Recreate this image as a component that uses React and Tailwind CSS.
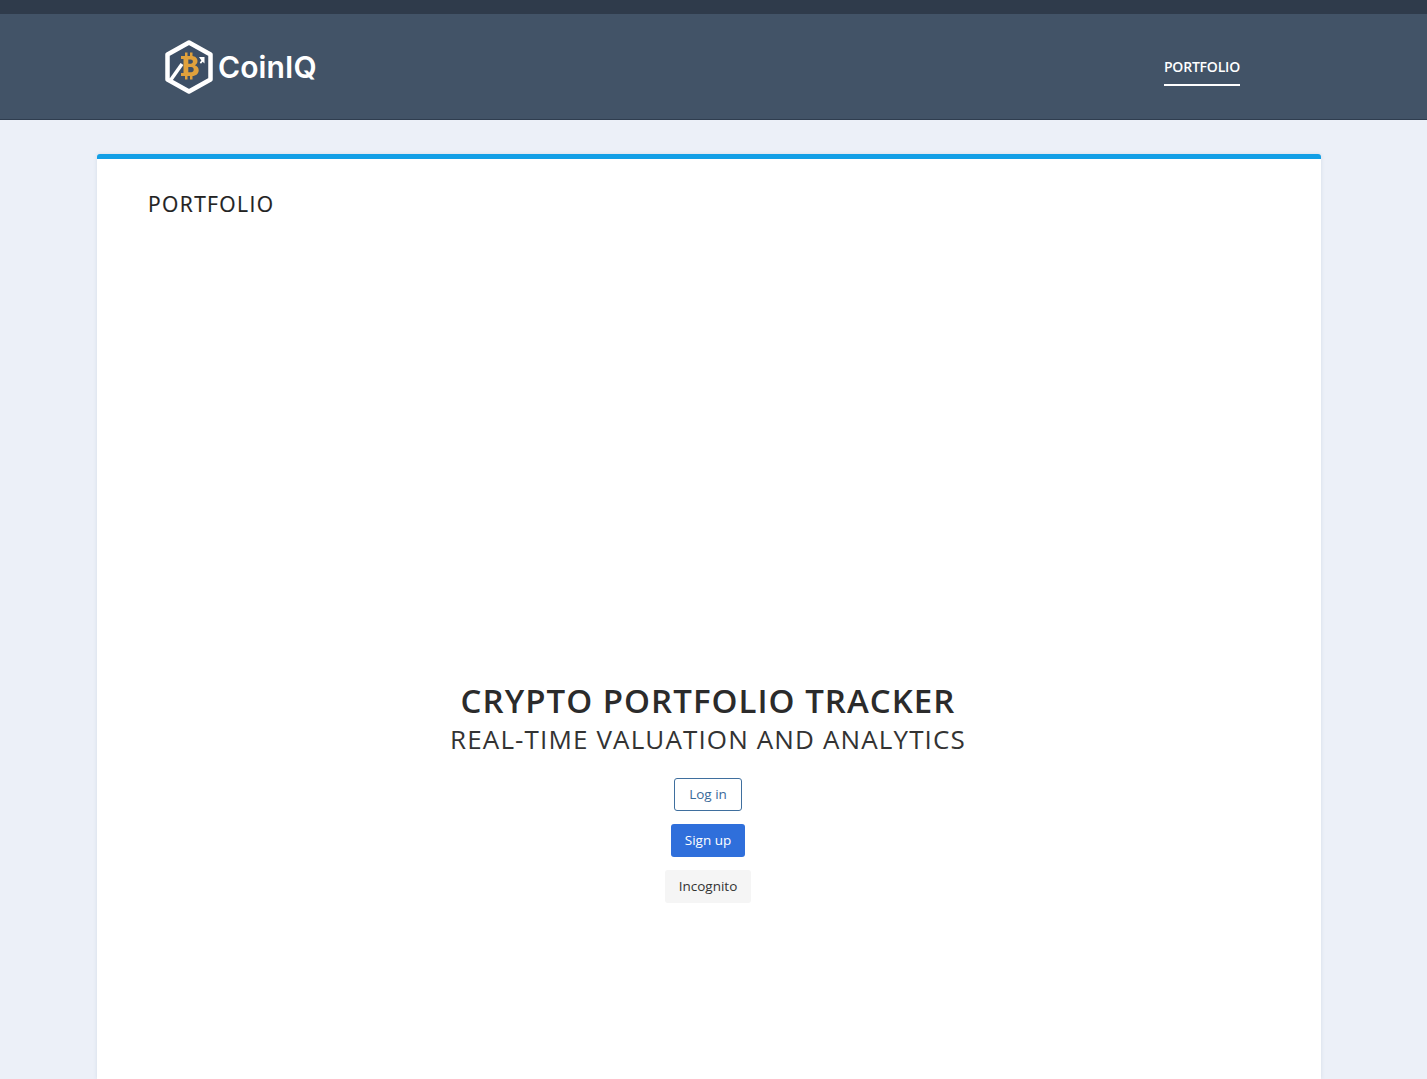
import React from "react";

const Logo = () => (
  <svg width="50" height="54" viewBox="0 0 50 54" fill="none">
    <path d="M25 2.5 46.5 14.5V39.5L25 51.5 3.5 39.5V14.5Z" stroke="#fff" strokeWidth="4.5" strokeLinejoin="round" fill="#3d4f66" />
    <path d="M6 41 18 24" stroke="#fff" strokeWidth="3.5" />
    <path
      fillRule="evenodd"
      d="M17 16h10.500c3.800 0 6 2.200 6 5 0 2-1 3.500-2.700 4.200 2.300.6 3.900 2.500 3.900 5 0 3.400-2.600 5.800-6.500 5.800H17v-3h2.500V19H17Zm7.300 3.500v4.200h2.400c1.400 0 2.200-.8 2.200-2.100s-.8-2.100-2.200-2.100Zm0 7.400v5.400h2.900c1.600 0 2.500-1 2.500-2.700s-.9-2.700-2.500-2.700Z"
      fill="#e0a13c"
    />
    <path d="M21 12.500h2.500v3.500H21ZM26 12.500h2.500v3.500H26ZM21 36h2.500v3.500H21ZM26 36h2.500v3.500H26Z" fill="#e0a13c" />
    <path d="M35 17h5.500v6.500l-1.800-1.700-1.700 2-1.300-1.200 1.700-2Z" fill="#fff" />
  </svg>
);

export default function App() {
  return (
    <div className="h-screen overflow-hidden flex flex-col bg-[#ecf0f8] font-['Open_Sans',sans-serif] text-[#2b2b2b]">
      <div className="h-[14px] shrink-0 bg-[#2f3b4b]" />
      <header className="h-[106px] shrink-0 bg-[#425367] border-b border-[#2f3d4f] flex items-center justify-between pl-[164px] pr-[187px]">
        <div className="flex items-center gap-[4px]">
          <Logo />
          <span className="font-['Inter',sans-serif] font-semibold text-[30px] leading-none tracking-[0.1px] text-white">
            CoinIQ
          </span>
        </div>
        <a className="mt-[9px] border-b-2 border-white pb-[7px] text-[14px] leading-[20px] font-semibold tracking-[-0.2px] text-white">
          PORTFOLIO
        </a>
      </header>

      <main className="flex-1 min-h-0 pt-[34px] pl-[97px] pr-[106px]">
        <div className="h-full rounded-t-[3px] border-t-[5px] border-[#129fe6] bg-white shadow-[0_0_4px_rgba(60,80,110,0.12)] pt-[29px] pl-[51px] pr-[53px]">
          <h2 className="text-[21px] leading-[32px] tracking-[1.4px] text-[#222] [-webkit-text-stroke:0.2px_#222]">
            PORTFOLIO
          </h2>

          <div className="mt-[461px] flex flex-col items-center">
            <h1 className="text-[33px] leading-[40px] font-semibold tracking-[1.03px] text-[#2b2b2b]">
              CRYPTO PORTFOLIO TRACKER
            </h1>
            <p className="text-[26px] leading-[36px] tracking-[1.13px] text-[#333]">
              REAL-TIME VALUATION AND ANALYTICS
            </p>

            <div className="mt-[21px] flex flex-col items-center gap-[13px] text-[13.5px]">
              <button className="h-[33px] px-[14px] pb-[1px] rounded-[3px] border border-[#3f6f9e] bg-white text-[#3a6a9a]">
                Log in
              </button>
              <button className="h-[33px] px-[14px] pb-[1px] rounded-[3px] bg-[#2f6fdb] text-white">Sign up</button>
              <button className="h-[33px] px-[14px] pb-[1px] rounded-[3px] bg-[#f5f5f5] text-[#333]">Incognito</button>
            </div>
          </div>
        </div>
      </main>
    </div>
  );
}
